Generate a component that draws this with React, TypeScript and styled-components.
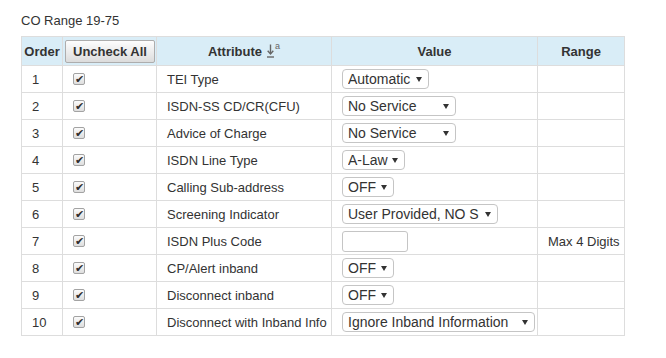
import { createGlobalStyle, styled } from 'styled-components'

const GlobalStyle = createGlobalStyle`
    body {
        margin: 0;
        font-family: 'Liberation Sans', Arial, sans-serif;
        color: #333;
        background: #fff;
    }
`

type ValueSpec =
    | { kind: 'select'; value: string; options: string[]; width: number; clip?: boolean }
    | { kind: 'input'; width: number }

interface AttrRow {
    order: number
    name: string
    value: ValueSpec
    range?: string
}

const ROWS: AttrRow[] = [
    { order: 1, name: 'TEI Type', value: { kind: 'select', value: 'Automatic', options: ['Automatic', 'Fixed'], width: 87 } },
    { order: 2, name: 'ISDN-SS CD/CR(CFU)', value: { kind: 'select', value: 'No Service', options: ['No Service', 'Service'], width: 114 } },
    { order: 3, name: 'Advice of Charge', value: { kind: 'select', value: 'No Service', options: ['No Service', 'Service'], width: 114 } },
    { order: 4, name: 'ISDN Line Type', value: { kind: 'select', value: 'A-Law', options: ['A-Law', 'μ-Law'], width: 63 } },
    { order: 5, name: 'Calling Sub-address', value: { kind: 'select', value: 'OFF', options: ['OFF', 'ON'], width: 52 } },
    {
        order: 6,
        name: 'Screening Indicator',
        value: {
            kind: 'select',
            value: 'User Provided, NO Screening',
            options: ['User Provided, NO Screening', 'User Provided, Verified', 'Network Provided'],
            width: 156,
            clip: true,
        },
    },
    { order: 7, name: 'ISDN Plus Code', value: { kind: 'input', width: 66 }, range: 'Max 4 Digits' },
    { order: 8, name: 'CP/Alert inband', value: { kind: 'select', value: 'OFF', options: ['OFF', 'ON'], width: 52 } },
    { order: 9, name: 'Disconnect inband', value: { kind: 'select', value: 'OFF', options: ['OFF', 'ON'], width: 52 } },
    {
        order: 10,
        name: 'Disconnect with Inband Info',
        value: {
            kind: 'select',
            value: 'Ignore Inband Information',
            options: ['Ignore Inband Information', 'Use Inband Information'],
            width: 193,
        },
    },
]

const Page = styled.div`
    padding: 13px 21px;
`

const Title = styled.div`
    font-size: 13px;
    line-height: 15px;
    margin-bottom: 8px;
`

const Table = styled.table`
    border-collapse: collapse;
    table-layout: fixed;
    width: 603px;
`

const HeadCell = styled.th`
    background: #d9edf7;
    border: 1px solid #ddd;
    height: 28px;
    padding: 0 2px;
    font-size: 13px;
    font-weight: bold;
    text-align: center;
    white-space: nowrap;
`

const Cell = styled.td`
    border: 1px solid #ddd;
    height: 26px;
    padding: 0 10px;
    font-size: 13px;
    white-space: nowrap;
    overflow: hidden;
    vertical-align: middle;
`

const RangeCell = styled(Cell)`
    padding: 0 2px 0 10px;
`

const Button = styled.button`
    width: 90px;
    height: 23px;
    padding: 0;
    border: 1px solid #adadad;
    border-radius: 2px;
    background: linear-gradient(#fdfdfd, #dcdcdc);
    font-family: inherit;
    font-size: 13px;
    font-weight: bold;
    color: #333;
    display: block;
    margin: 0 auto;
`

const SortIcon = styled.span`
    display: inline-flex;
    align-items: flex-start;
    margin-left: 5px;
    color: #666;
    vertical-align: -2px;
    sup {
        font-size: 9px;
        font-weight: normal;
        line-height: 9px;
        margin-left: 1px;
        margin-top: -2px;
    }
`

const Check = styled.input`
    appearance: none;
    margin: 0;
    width: 12px;
    height: 12px;
    border: 1px solid #a3a3a3;
    border-radius: 2px;
    background: linear-gradient(#fbfbfb, #dedede);
    position: relative;
    display: block;
    &::before {
        content: '✔';
        position: absolute;
        left: 1px;
        top: -2px;
        font-size: 11px;
        line-height: 14px;
        color: #2f2f2f;
    }
`

const SelectWrap = styled.span`
    position: relative;
    display: inline-block;
    vertical-align: middle;
    &::after {
        content: '';
        position: absolute;
        right: 7px;
        top: 8px;
        border-left: 3.5px solid transparent;
        border-right: 3.5px solid transparent;
        border-top: 5px solid #333;
        pointer-events: none;
    }
`

const Select = styled.select<{ $width: number; $clip?: boolean }>`
    appearance: none;
    display: block;
    width: ${(p) => p.$width}px;
    height: 20px;
    margin: 0;
    padding: 0 ${(p) => (p.$clip ? 18 : 14)}px 0 5px;
    border: 1px solid #c5c5c5;
    border-radius: 4px;
    background: #fff;
    font-family: inherit;
    font-size: 14px;
    color: #333;
    outline: none;
`

const TextInput = styled.input<{ $width: number }>`
    display: block;
    box-sizing: border-box;
    width: ${(p) => p.$width}px;
    height: 21px;
    margin: 0;
    padding: 0 4px;
    border: 1px solid #c5c5c5;
    border-radius: 3px;
    font-family: inherit;
    font-size: 14px;
    color: #333;
`

const SortArrow = () => (
    <svg width="7" height="14" viewBox="0 0 7 14">
        <path d="M3.5 0.5 V9.5" stroke="currentColor" strokeWidth="1.4" fill="none" />
        <path d="M0.7 6.8 L3.5 10 L6.3 6.8" stroke="currentColor" strokeWidth="1.4" fill="none" />
        <path d="M0 13 H7" stroke="currentColor" strokeWidth="1.4" />
    </svg>
)

const ValueField = ({ value }: { value: ValueSpec }) => {
    if (value.kind === 'input') return <TextInput type="text" $width={value.width} defaultValue="" />
    return (
        <SelectWrap>
            <Select $width={value.width} $clip={value.clip} defaultValue={value.value}>
                {value.options.map((o) => (
                    <option key={o}>{o}</option>
                ))}
            </Select>
        </SelectWrap>
    )
}

export default function App() {
    return (
        <Page>
            <GlobalStyle />
            <Title>CO Range 19-75</Title>
            <Table>
                <colgroup>
                    <col style={{ width: 41 }} />
                    <col style={{ width: 94 }} />
                    <col style={{ width: 175 }} />
                    <col style={{ width: 206 }} />
                    <col style={{ width: 87 }} />
                </colgroup>
                <thead>
                    <tr>
                        <HeadCell>Order</HeadCell>
                        <HeadCell>
                            <Button type="button">Uncheck All</Button>
                        </HeadCell>
                        <HeadCell>
                            Attribute
                            <SortIcon>
                                <SortArrow />
                                <sup>a</sup>
                            </SortIcon>
                        </HeadCell>
                        <HeadCell>Value</HeadCell>
                        <HeadCell>Range</HeadCell>
                    </tr>
                </thead>
                <tbody>
                    {ROWS.map((row) => (
                        <tr key={row.order}>
                            <Cell>{row.order}</Cell>
                            <Cell>
                                <Check type="checkbox" defaultChecked />
                            </Cell>
                            <Cell>{row.name}</Cell>
                            <Cell>
                                <ValueField value={row.value} />
                            </Cell>
                            <RangeCell>{row.range}</RangeCell>
                        </tr>
                    ))}
                </tbody>
            </Table>
        </Page>
    )
}
